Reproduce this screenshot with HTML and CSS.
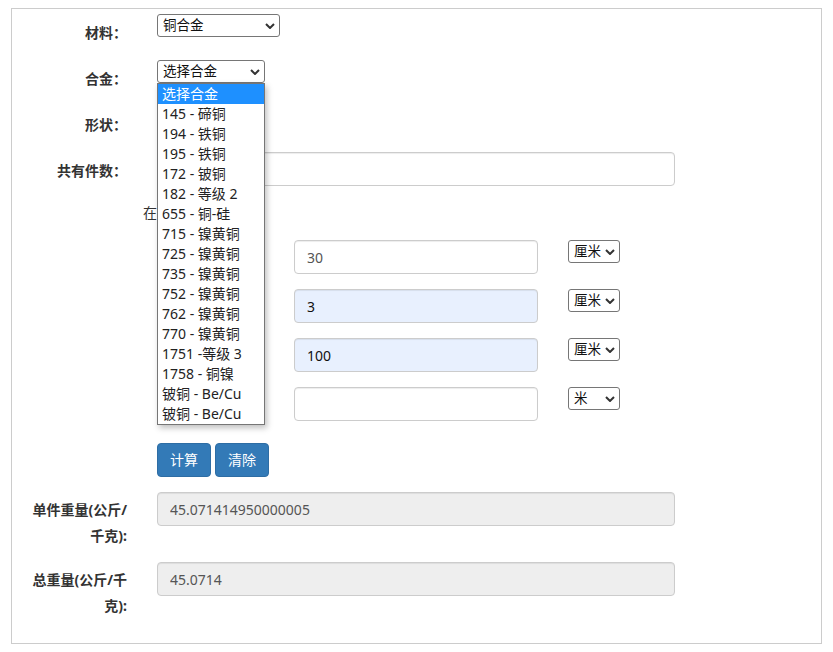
FILE: index.html
```html
<!DOCTYPE html>
<html lang="zh-CN">
<head>
    <meta charset="UTF-8">
    <meta name="viewport" content="width=device-width, initial-scale=1.0">
    <title>金属重量计算器</title>
    <link rel="stylesheet" href="styles.css">
</head>
<body>
    <div class="panel">
        <form class="calc">
            <div class="row sel-row">
                <label class="lbl">材料：</label>
                <div class="sel w-mat">
                    <select><option>铜合金</option></select>
                    <svg class="caret" width="10" height="6" viewBox="0 0 10 6"><path d="M1 1l4 4 4-4" fill="none" stroke="#333" stroke-width="2"/></svg>
                </div>
            </div>
            <div class="row sel-row">
                <label class="lbl">合金：</label>
                <div class="sel w-alloy">
                    <select><option>选择合金</option></select>
                    <svg class="caret" width="10" height="6" viewBox="0 0 10 6"><path d="M1 1l4 4 4-4" fill="none" stroke="#333" stroke-width="2"/></svg>
                    <ul class="dropdown">
                        <li class="active">选择合金</li>
                        <li>145 - 碲铜</li>
                        <li>194 - 铁铜</li>
                        <li>195 - 铁铜</li>
                        <li>172 - 铍铜</li>
                        <li>182 - 等级 2</li>
                        <li>655 - 铜-硅</li>
                        <li>715 - 镍黄铜</li>
                        <li>725 - 镍黄铜</li>
                        <li>735 - 镍黄铜</li>
                        <li>752 - 镍黄铜</li>
                        <li>762 - 镍黄铜</li>
                        <li>770 - 镍黄铜</li>
                        <li>1751 -等级 3</li>
                        <li>1758 - 铜镍</li>
                        <li>铍铜 - Be/Cu</li>
                        <li>铍铜 - Be/Cu</li>
                    </ul>
                </div>
            </div>
            <div class="row sel-row">
                <label class="lbl">形状：</label>
                <div class="sel w-shape">
                    <select><option></option></select>
                </div>
            </div>
            <div class="row">
                <label class="lbl">共有件数：</label>
                <input type="text" class="field wide">
            </div>
            <p class="hint">在</p>
            <div class="row">
                <span class="lbl"></span>
                <span class="dim-lbl"></span>
                <input type="text" class="field dim" value="30">
                <div class="sel w-unit">
                    <select><option>厘米</option></select>
                    <svg class="caret" width="10" height="6" viewBox="0 0 10 6"><path d="M1 1l4 4 4-4" fill="none" stroke="#333" stroke-width="2"/></svg>
                </div>
            </div>
            <div class="row">
                <span class="lbl"></span>
                <span class="dim-lbl"></span>
                <input type="text" class="field dim filled" value="3">
                <div class="sel w-unit">
                    <select><option>厘米</option></select>
                    <svg class="caret" width="10" height="6" viewBox="0 0 10 6"><path d="M1 1l4 4 4-4" fill="none" stroke="#333" stroke-width="2"/></svg>
                </div>
            </div>
            <div class="row">
                <span class="lbl"></span>
                <span class="dim-lbl"></span>
                <input type="text" class="field dim filled" value="100">
                <div class="sel w-unit">
                    <select><option>厘米</option></select>
                    <svg class="caret" width="10" height="6" viewBox="0 0 10 6"><path d="M1 1l4 4 4-4" fill="none" stroke="#333" stroke-width="2"/></svg>
                </div>
            </div>
            <div class="row last-dim">
                <span class="lbl"></span>
                <span class="dim-lbl"></span>
                <input type="text" class="field dim">
                <div class="sel w-unit">
                    <select><option>米</option></select>
                    <svg class="caret" width="10" height="6" viewBox="0 0 10 6"><path d="M1 1l4 4 4-4" fill="none" stroke="#333" stroke-width="2"/></svg>
                </div>
            </div>
            <div class="row">
                <span class="lbl"></span>
                <div class="btns">
                    <button type="button" class="btn">计算</button>
                    <button type="button" class="btn">清除</button>
                </div>
            </div>
            <div class="row out-row">
                <label class="lbl lbl-wrap">单件重量(公斤/千克):</label>
                <input type="text" class="field wide" value="45.071414950000005" readonly>
            </div>
            <div class="row out-row">
                <label class="lbl lbl-wrap">总重量(公斤/千克):</label>
                <input type="text" class="field wide" value="45.0714" readonly>
            </div>
        </form>
    </div>
</body>
</html>
```

FILE: styles.css
```css
body, html {
    margin: 0;
    padding: 0;
    font-family: "Noto Sans", "Noto Sans CJK SC", sans-serif;
    font-size: 14px;
    color: #333;
    background-color: #ffffff;
}
body {
    padding: 8px 11px;
}
.panel {
    border: 1px solid #ccc;
    padding: 5px 15px 24px;
}
.calc {
    margin: 0;
}
.row {
    display: flex;
    align-items: flex-start;
    margin-bottom: 15px;
}
.sel-row {
    min-height: 31px;
}
.lbl {
    flex: 0 0 100px;
    width: 100px;
    margin-right: 30px;
    padding-top: 9px;
    line-height: 20px;
    font-weight: bold;
    text-align: right;
    min-height: 1px;
}
.lbl-wrap {
    padding-top: 5px;
    line-height: 26px;
}
.out-row {
    margin-bottom: 13px;
}
.out-row:last-child {
    margin-bottom: 0;
}
.dim-lbl {
    flex: 0 0 108px;
    margin-right: 29px;
}
.hint {
    margin: 17px 0;
    padding-left: 116px;
    line-height: 20px;
}
.last-dim {
    margin-bottom: 22px;
}
.sel {
    position: relative;
    height: 23px;
}
.sel select {
    -webkit-appearance: none;
    appearance: none;
    width: 100%;
    height: 23px;
    margin: 0;
    padding: 0 18px 0 5px;
    border: 1px solid #767676;
    border-radius: 3px;
    background-color: #ffffff;
    color: #111;
    font-family: inherit;
    font-size: 13.5px;
    line-height: 21px;
}
.caret {
    position: absolute;
    right: 5px;
    top: 9px;
    pointer-events: none;
}
.w-mat {
    width: 123px;
}
.w-alloy {
    width: 108px;
}
.w-shape {
    width: 90px;
}
.w-unit {
    width: 52px;
    margin-left: 30px;
}
.dropdown {
    position: absolute;
    z-index: 10;
    top: 23px;
    left: 0;
    width: 108px;
    margin: 0;
    padding: 0;
    list-style: none;
    box-sizing: border-box;
    background-color: #ffffff;
    border: 1px solid #767676;
    box-shadow: 2px 3px 6px rgba(0,0,0,0.25);
}
.dropdown li {
    height: 20px;
    padding: 0 4px;
    line-height: 20px;
    font-size: 14px;
    color: #222;
    white-space: nowrap;
}
.dropdown li.active {
    background-color: #1e90ff;
    color: #ffffff;
}
.field {
    box-sizing: border-box;
    height: 34px;
    margin: 0;
    padding: 6px 12px;
    border: 1px solid #ccc;
    border-radius: 4px;
    box-shadow: inset 0 1px 1px rgba(0,0,0,0.075);
    background-color: #ffffff;
    color: #555;
    font-family: inherit;
    font-size: 14px;
}
.wide {
    width: 518px;
}
.dim {
    width: 244px;
}
.filled {
    background-color: #e8f0fe;
    color: #111;
}
.field[readonly] {
    background-color: #eeeeee;
}
.btns {
    display: flex;
    gap: 4px;
}
.btn {
    height: 34px;
    padding: 6px 12px;
    border: 1px solid #2e6da4;
    border-radius: 4px;
    background-color: #337ab7;
    color: #ffffff;
    font-family: inherit;
    font-size: 14px;
    line-height: 20px;
    cursor: pointer;
}
```
